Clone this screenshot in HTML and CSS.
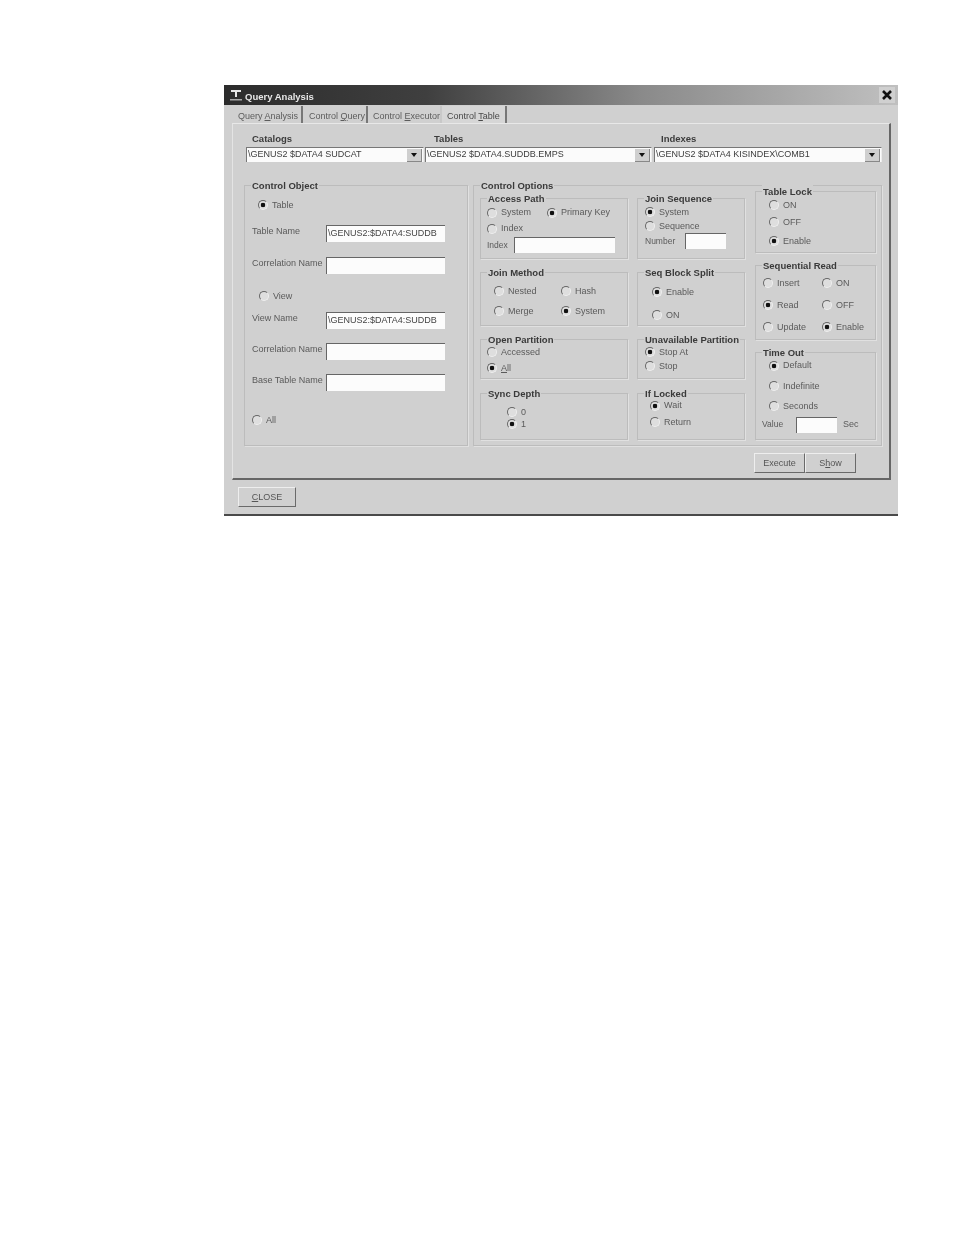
FILE: index.html
```html
<!DOCTYPE html>
<html lang="en">
<head>
<meta charset="utf-8">
<title>Query Analysis</title>
<link rel="stylesheet" href="styles.css">
</head>
<body>
<div class="window">
  <div class="titlebar">
    <svg class="appicon" width="16" height="16" viewBox="0 0 16 16"><path d="M3 3h10v2H9v5H7V5H3z" fill="#e6e6e6"/><path d="M2 12h12v1.5H2z" fill="#a8a8a8"/></svg>
    <span class="title">Query Analysis</span>
    <svg class="close-x" width="16" height="16" viewBox="0 0 16 16"><path d="M4 4l8 8M12 4l-8 8" stroke="#111" stroke-width="2.6"/></svg>
  </div>
  <div class="tabs">
    <div class="tab t1">Query <u>A</u>nalysis</div>
    <div class="tab t2">Control <u>Q</u>uery</div>
    <div class="tab t3">Control <u>E</u>xecutor</div>
    <div class="tab t4 active">Control <u>T</u>able</div>
  </div>
  <div class="panel">
    <div class="combo-labels">
      <b class="cl1">Catalogs</b><b class="cl2">Tables</b><b>Indexes</b>
    </div>
    <div class="combos">
      <div class="combo c1"><span class="combo-text">\GENUS2 $DATA4 SUDCAT</span><span class="arrow"></span></div>
      <div class="combo c2"><span class="combo-text">\GENUS2 $DATA4.SUDDB.EMPS</span><span class="arrow"></span></div>
      <div class="combo c3"><span class="combo-text">\GENUS2 $DATA4 KISINDEX\COMB1</span><span class="arrow"></span></div>
    </div>
    <div class="main">
      <div class="group object">
        <div class="legend">Control Object</div>
        <div class="body object-body">
          <div class="row i13"><span class="radio on"></span>Table</div>
          <div class="row i7"><span class="lab">Table Name</span><span class="input wide">\GENUS2:$DATA4:SUDDB</span></div>
          <div class="row i7"><span class="lab up">Correlation Name</span><span class="input wide"></span></div>
          <div class="row i14"><span class="radio"></span>View</div>
          <div class="row i7"><span class="lab">View Name</span><span class="input wide">\GENUS2:$DATA4:SUDDB</span></div>
          <div class="row i7"><span class="lab up">Correlation Name</span><span class="input wide"></span></div>
          <div class="row i7"><span class="lab up">Base Table Name</span><span class="input wide"></span></div>
          <div class="row i7 pt4"><span class="radio"></span>All</div>
        </div>
      </div>
      <div class="group options">
        <div class="legend">Control Options</div>
        <div class="columns">
          <div class="col col1">
            <div class="group access">
              <div class="legend">Access Path</div>
              <div class="body access-body">
                <div class="row i6"><span class="cell c60"><span class="radio"></span>System</span><span class="radio on"></span>Primary Key</div>
                <div class="row i6"><span class="radio"></span>Index</div>
                <div class="row i6"><span class="mini m27">Index</span><span class="input w101"></span></div>
              </div>
            </div>
            <div class="group method">
              <div class="legend">Join Method</div>
              <div class="body method-body">
                <div class="row i13"><span class="cell c67"><span class="radio"></span>Nested</span><span class="radio"></span>Hash</div>
                <div class="row i13"><span class="cell c67"><span class="radio"></span>Merge</span><span class="radio on"></span>System</div>
              </div>
            </div>
            <div class="group partition">
              <div class="legend">Open Partition</div>
              <div class="body partition-body">
                <div class="row i6"><span class="radio"></span>Accessed</div>
                <div class="row i6"><span class="radio on"></span><u>A</u>ll</div>
              </div>
            </div>
            <div class="group sync">
              <div class="legend">Sync Depth</div>
              <div class="body sync-body">
                <div class="row i26"><span class="radio"></span>0</div>
                <div class="row i26"><span class="radio on"></span>1</div>
              </div>
            </div>
          </div>
          <div class="col col2">
            <div class="group access">
              <div class="legend">Join Sequence</div>
              <div class="body sequence-body">
                <div class="row i7"><span class="radio on"></span>System</div>
                <div class="row i7"><span class="radio"></span>Sequence</div>
                <div class="row i7"><span class="mini m40">Number</span><span class="input w41"></span></div>
              </div>
            </div>
            <div class="group method">
              <div class="legend">Seq Block Split</div>
              <div class="body split-body">
                <div class="row i14"><span class="radio on"></span>Enable</div>
                <div class="row i14"><span class="radio"></span>ON</div>
              </div>
            </div>
            <div class="group partition">
              <div class="legend">Unavailable Partition</div>
              <div class="body unavailable-body">
                <div class="row i7"><span class="radio on"></span>Stop At</div>
                <div class="row i7"><span class="radio"></span>Stop</div>
              </div>
            </div>
            <div class="group sync">
              <div class="legend">If Locked</div>
              <div class="body locked-body">
                <div class="row i12"><span class="radio on"></span>Wait</div>
                <div class="row i12"><span class="radio"></span>Return</div>
              </div>
            </div>
          </div>
          <div class="col col3">
            <div class="group lock">
              <div class="legend">Table Lock</div>
              <div class="body lock-body">
                <div class="row i13"><span class="radio"></span>ON</div>
                <div class="row i13"><span class="radio"></span>OFF</div>
                <div class="row i13"><span class="radio on"></span>Enable</div>
              </div>
            </div>
            <div class="group seqread">
              <div class="legend">Sequential Read</div>
              <div class="body seqread-body">
                <div class="row i7"><span class="cell c59"><span class="radio"></span>Insert</span><span class="radio"></span>ON</div>
                <div class="row i7"><span class="cell c59"><span class="radio on"></span>Read</span><span class="radio"></span>OFF</div>
                <div class="row i7"><span class="cell c59"><span class="radio"></span>Update</span><span class="radio on"></span>Enable</div>
              </div>
            </div>
            <div class="group timeout">
              <div class="legend">Time Out</div>
              <div class="body timeout-body">
                <div class="row i13"><span class="radio on"></span>Default</div>
                <div class="row i13"><span class="radio"></span>Indefinite</div>
                <div class="row i13"><span class="radio"></span>Seconds</div>
                <div class="row i6"><span class="mini m34">Value</span><span class="input w41"></span><span class="sec">Sec</span></div>
              </div>
            </div>
          </div>
        </div>
      </div>
    </div>
    <div class="actions">
      <div class="btn exec">Execute</div>
      <div class="btn show">S<u>h</u>ow</div>
    </div>
  </div>
  <div class="footer">
    <div class="btn closebtn"><u>C</u>LOSE</div>
  </div>
</div>
</body>
</html>
```
FILE: styles.css
```css
* { box-sizing: border-box; }
html, body { margin: 0; background: #fff; }
body { height: 1235px; padding: 85px 0 0 224px; overflow: hidden; }

.window {
  width: 674px; height: 431px;
  background: #d0d0d0;
  border-bottom: 2px solid #4a4a4a;
  font: 9px/11px "Liberation Sans", Arial, sans-serif;
  color: #5a5a5a;
  filter: blur(0.7px);
  white-space: nowrap;
}
.titlebar {
  height: 20px;
  display: flex; align-items: center;
  padding: 0 3px 0 4px;
  background: linear-gradient(90deg, #2c2c2c 0, #3f3f3f 30%, #8a8a8a 62%, #c0c0c0 100%);
}
.appicon { flex: none; }
.title { margin: 3px 0 0 1px; font: bold 9.5px/12px "Liberation Sans", Arial, sans-serif; color: #e8e8e8; }
.close-x { margin-left: auto; background: #d0d0d0; }

.tabs { height: 18px; display: flex; padding: 1px 0 0 10px; }
.tab { height: 17px; line-height: 16px; padding-top: 2px; border-right: 2px solid #777; color: #5c5c5c; padding-left: 4px; }
.t1 { width: 69px; }
.t2 { width: 65px; padding-left: 6px; }
.t3 { width: 74px; padding-left: 5px; border-right-color: #c8c8c8; }
.t4 { width: 65px; padding-left: 5px; color: #484848; background: #d6d6d6; }

.panel {
  width: 659px; height: 357px; margin-left: 8px;
  border-top: 1px solid #e8e8e8;
  border-left: 1px solid #e4e4e4;
  border-right: 2px solid #666;
  border-bottom: 2px solid #666;
  background: #d0d0d0;
}
.combo-labels { height: 23px; padding: 9px 0 0 19px; display: flex; line-height: 11px; }
.combo-labels b { font-size: 9.5px; color: #3c3c3c; }
.cl1 { width: 182px; }
.cl2 { width: 227px; }
.combos { display: flex; height: 15px; padding-left: 13px; }
.combo {
  display: flex; align-items: center; height: 15px;
  background: #fbfbfb;
  border-top: 1px solid #777; border-left: 1px solid #777;
  border-right: 1px solid #ececec;
  color: #3c3c3c;
  padding-right: 1px;
}
.c1 { width: 178px; margin-right: 1px; }
.c2 { width: 227px; margin-right: 2px; }
.c3 { width: 228px; }
.combo-text { flex: 1; padding: 0 0 1px 1px; }
.arrow {
  width: 15px; height: 13px; background: #cfcfcf;
  border-right: 1px solid #888; border-bottom: 1px solid #888;
  display: flex; align-items: center; justify-content: center;
}
.arrow::after {
  content: ""; border: 3px solid transparent; border-top: 4px solid #111; border-bottom: 0;
}

.main { display: flex; gap: 5px; margin: 23px 0 0 11px; }
.group { border: 1px solid #bcbcbc; box-shadow: 1px 1px 0 #e0e0e0; }
.legend {
  width: fit-content; height: 13px; margin: -7px 0 0 6px; padding: 0 1px;
  font: bold 9.5px/13px "Liberation Sans", Arial, sans-serif; color: #3a3a3a;
  background: #d0d0d0;
}
.object { width: 224px; height: 261px; }
.options { width: 409px; height: 261px; }

.body { display: grid; }
.row { display: flex; align-items: center; min-height: 0; }
.cell { display: flex; align-items: center; }
.c59 { width: 59px; } .c60 { width: 60px; } .c67 { width: 67px; }
.i6 { padding-left: 6px; } .i7 { padding-left: 7px; } .i12 { padding-left: 12px; }
.i13 { padding-left: 13px; } .i14 { padding-left: 14px; } .i26 { padding-left: 26px; }
.pt4 { padding-top: 4px; }

.radio {
  flex: none; width: 10px; height: 10px; margin-right: 4px; border-radius: 50%;
  border: 1px solid; border-color: #666 #eeeeee #eeeeee #666;
  background: #dedede;
}
.radio.on { background: radial-gradient(circle, #111 0 2px, #dedede 2.6px); }

.lab { flex: none; width: 74px; margin-bottom: 4px; }
.input {
  display: block; flex: none; height: 16px; line-height: 15px;
  background: #fcfcfc; color: #444; padding-left: 1px; overflow: hidden;
  border-top: 1px solid #666; border-left: 1px solid #666;
}
.input.wide { width: 119px; height: 17px; }
.w101 { width: 101px; } .w41 { width: 41px; }
.mini { flex: none; font-size: 8.5px; }
.m27 { width: 27px; } .m34 { width: 34px; } .m40 { width: 40px; }
.sec { margin-left: 6px; }

.object-body { grid-template-rows: 26px 30px 34px 28px 20px 42px 20px 52px; }

.columns { display: flex; padding-left: 6px; }
.col { display: flex; flex-direction: column; }
.col1 { width: 148px; margin: 6px 9px 0 0; }
.col2 { width: 108px; margin: 6px 10px 0 0; }
.col3 { width: 121px; margin-top: -1px; }
.access { height: 61px; margin-bottom: 13px; }
.method { height: 54px; margin-bottom: 13px; }
.partition { height: 40px; margin-bottom: 14px; }
.sync { height: 47px; }
.lock { height: 62px; margin-bottom: 12px; }
.seqread { height: 75px; margin-bottom: 12px; }
.timeout { height: 88px; }

.access-body { grid-template-rows: 15px 17px 16px; }
.sequence-body { grid-template-rows: 14px 14px 16px; }
.method-body { grid-template-rows: 24px 16px; }
.split-body { grid-template-rows: 26px 20px; }
.partition-body { grid-template-rows: 12px 20px; }
.unavailable-body { grid-template-rows: 12px 16px; }
.sync-body { padding-top: 6px; grid-template-rows: 12px 12px; }
.locked-body { grid-template-rows: 11px 22px; }
.lock-body { grid-template-rows: 14px 20px 18px; }
.seqread-body { grid-template-rows: 22px 22px 22px; }
.timeout-body { grid-template-rows: 13px 28px 12px 16px; }
.timeout-body .row:last-child { margin-top: 9px; }

.actions { display: flex; justify-content: flex-end; margin: 7px 33px 0 0; }
.btn {
  height: 20px; line-height: 18px; text-align: center; color: #555;
  border: 1px solid; border-color: #eee #6a6a6a #6a6a6a #eee;
  background: #d0d0d0;
}
.exec, .show { width: 51px; }
.footer { padding: 7px 0 0 14px; }
.closebtn { width: 58px; }
```
